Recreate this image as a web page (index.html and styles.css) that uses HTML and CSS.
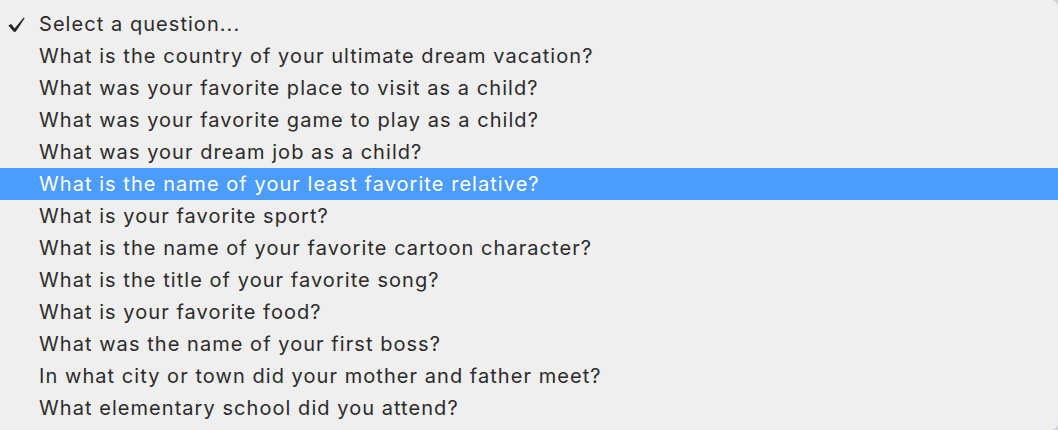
FILE: index.html
```html
<!DOCTYPE html>
<html lang="en">
<head>
    <meta charset="UTF-8">
    <meta name="viewport" content="width=device-width, initial-scale=1.0">
    <title>Security question</title>
    <link rel="stylesheet" href="styles.css">
</head>
<body>
    <ul class="menu">
        <li class="item checked">
            <svg class="check" width="18" height="17" viewBox="0 0 22 20">
                <path d="M1.6 11.2 L5.2 9.4 L9.3 15 L20.4 1.4 L21.6 2.4 L10.6 18.8 L8.2 18.8 Z" fill="#262626"/>
            </svg>
            Select a question...
        </li>
        <li class="item">What is the country of your ultimate dream vacation?</li>
        <li class="item">What was your favorite place to visit as a child?</li>
        <li class="item">What was your favorite game to play as a child?</li>
        <li class="item">What was your dream job as a child?</li>
        <li class="item active">What is the name of your least favorite relative?</li>
        <li class="item">What is your favorite sport?</li>
        <li class="item">What is the name of your favorite cartoon character?</li>
        <li class="item">What is the title of your favorite song?</li>
        <li class="item">What is your favorite food?</li>
        <li class="item">What was the name of your first boss?</li>
        <li class="item">In what city or town did your mother and father meet?</li>
        <li class="item">What elementary school did you attend?</li>
    </ul>
</body>
</html>
```

FILE: styles.css
```css
* {
    margin: 0;
    padding: 0;
    box-sizing: border-box;
}

body {
    background: #c9d2dd;
    width: 1058px;
    height: 430px;
    overflow: hidden;
}

.menu {
    list-style: none;
    background: #efefef;
    height: 430px;
    padding: 8px 0 6px;
    border-radius: 0 7px 7px 0;
    font-family: Inter, "Liberation Sans", Arial, sans-serif;
    font-size: 20px;
    letter-spacing: 1.05px;
    color: #2b2b2b;
}

.item {
    position: relative;
    height: 32px;
    line-height: 32px;
    padding-left: 39px;
    white-space: nowrap;
}

.item.active {
    background: #4c9cfb;
    color: #fff;
}

/* checkmark sits in the gutter left of the label */
.check {
    position: absolute;
    left: 7px;
    top: 8px;
}
```
